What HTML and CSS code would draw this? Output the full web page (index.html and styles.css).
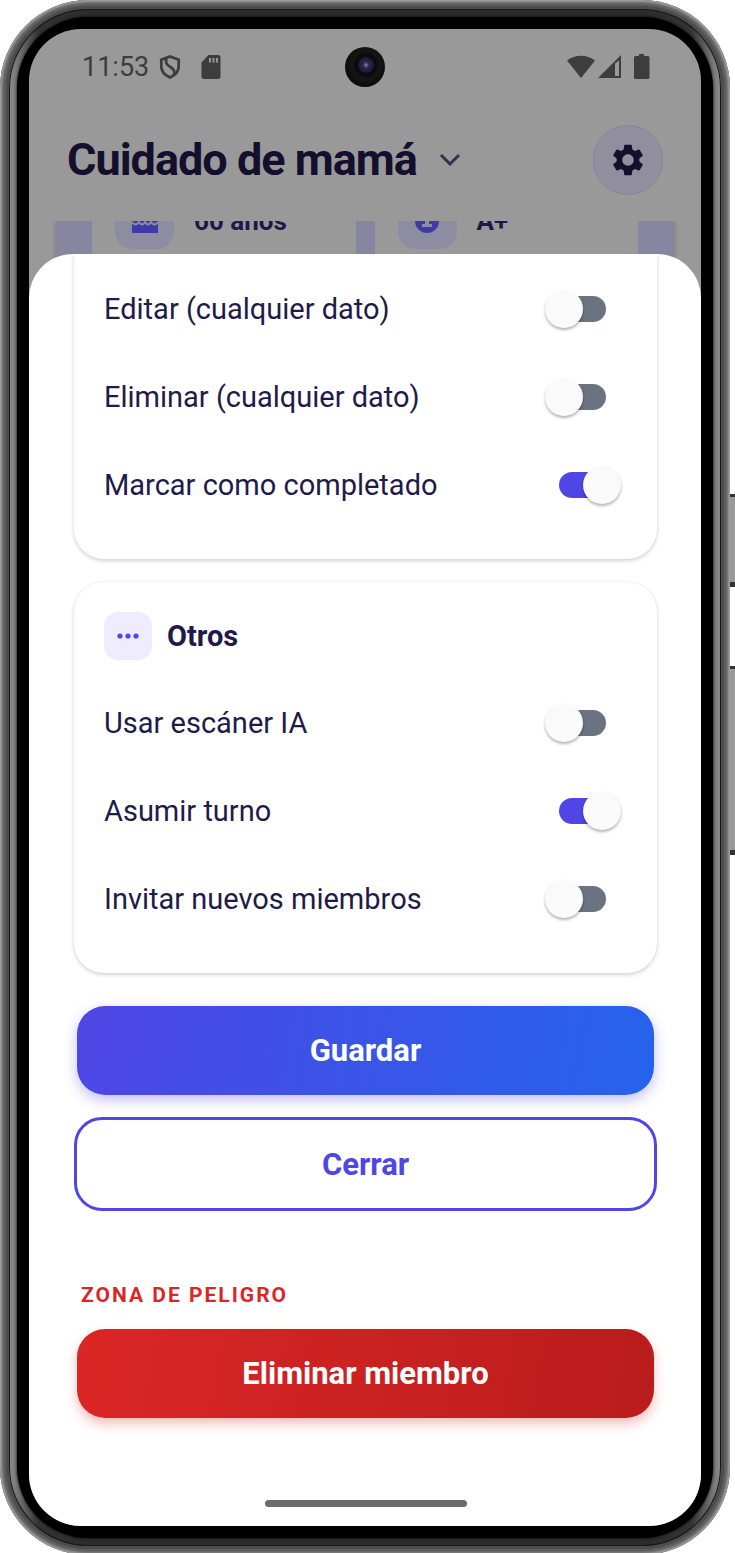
FILE: index.html
```html
<!DOCTYPE html>
<html lang="es">
<head>
	<meta charset="UTF-8">
	<meta name="viewport" content="width=device-width, initial-scale=1">
	<title>Cuidado de mamá</title>
	<link rel="stylesheet" href="styles.css">
</head>
<body>
<div class="phone">
	<span class="side-key power"></span>
	<span class="side-key volume"></span>
	<div class="rim">
	<div class="bezel">
	<div class="screen">

		<div class="status">
			<span class="time">11:53</span>
			<svg class="shield" width="22" height="26" viewBox="0 0 24 28" fill="none" stroke="#3d3d3d" stroke-width="3">
				<path d="M12 2.500 21.500 6v7.500c0 5.500-4 9.500-9.500 12-5.500-2.500-9.500-6.500-9.500-12V6z"/>
				<path d="M8 4.500c-1 5 0 7 4.500 9.500 4 2.500 5 4.500 4 8.500"/>
			</svg>
			<svg class="sdcard" width="20" height="24" viewBox="0 0 20 24">
				<path fill="#3d3d3d" d="M7.500 0H17a2.500 2.500 0 0 1 2.500 2.500v19A2.500 2.500 0 0 1 17 24H3a2.500 2.500 0 0 1-2.500-2.500V7.500z"/>
				<path stroke="#999" stroke-width="2" d="M9 3v4.500M12.500 3v4.500M16 3v4.500"/>
			</svg>
			<span class="camera"></span>
			<svg class="signals" width="83" height="26" viewBox="0 0 83 26" fill="#3d3d3d">
				<path d="M0 6.500C8 0 20 0 28 6.500L14 24z"/>
				<path d="M54 1v23H31zM48 9.500V22h4V6.500z" fill-rule="evenodd"/>
				<path d="M72 0h5v2h4a1.500 1.500 0 0 1 1.500 1.500v20A1.500 1.500 0 0 1 81 25H68.500a1.500 1.500 0 0 1-1.500-1.500v-20A1.500 1.500 0 0 1 68.500 2H72z"/>
			</svg>
		</div>

		<header class="header">
			<h1>Cuidado de mamá</h1>
			<svg class="chevron" width="22" height="14" viewBox="0 0 22 14" fill="none" stroke="#353150" stroke-width="3">
				<path d="M2 2l9 9 9-9"/>
			</svg>
			<button class="settings" type="button" aria-label="Ajustes">
				<svg width="38" height="38" viewBox="0 0 24 24" fill="#140f2d">
					<path d="M19.140 12.940c.04-.3.06-.61.06-.94 0-.32-.02-.64-.07-.94l2.030-1.580c.18-.14.23-.41.12-.61l-1.920-3.320c-.12-.22-.37-.29-.59-.22l-2.390.96c-.5-.38-1.030-.7-1.620-.94L14.400 2.810c-.04-.24-.24-.41-.48-.41h-3.840c-.24 0-.43.17-.47.41L9.250 5.350C8.660 5.590 8.120 5.920 7.630 6.290L5.240 5.330c-.22-.08-.47 0-.59.22L2.740 8.870c-.12.21-.08.47.12.61l2.030 1.580c-.05.3-.09.63-.09.94s.02.64.07.94l-2.030 1.580c-.18.14-.23.41-.12.61l1.920 3.320c.12.22.37.29.59.22l2.390-.96c.5.38 1.030.7 1.620.94l.36 2.540c.05.24.24.41.48.41h3.840c.24 0 .44-.17.47-.41l.36-2.540c.59-.24 1.130-.56 1.620-.94l2.390.96c.22.08.47 0 .59-.22l1.920-3.320c.12-.22.07-.47-.12-.61zM12 15.600c-1.980 0-3.600-1.620-3.600-3.600s1.620-3.600 3.600-3.600 3.600 1.620 3.600 3.600-1.620 3.600-3.600 3.600z"/>
				</svg>
			</button>
		</header>

		<!-- resumen del paciente, queda detras de la hoja -->
		<section class="summary">
			<div class="summary-card">
				<div class="fact">
					<span class="fact-icon">
						<svg width="28" height="28" viewBox="0 0 28 28">
							<path fill="#3f3aa8" d="M1 10h26v17H1z"/>
							<path fill="none" stroke="#8d8ca5" stroke-width="2" d="M1 16q3.500 5 7 0 3 5 6 0 3 5 6 0 3.500 5 7 0"/>
						</svg>
					</span>
					<b>60 años</b>
				</div>
				<div class="fact">
					<span class="fact-icon">
						<svg width="24" height="28" viewBox="0 0 24 28">
							<circle cx="12" cy="15" r="12" fill="#3f3aa8"/>
							<path fill="#8d8ca5" d="M10 11h4v7h3v3H7v-3h3z"/>
						</svg>
					</span>
					<b>A+</b>
				</div>
			</div>
		</section>

		<main class="sheet">
			<section class="card first">
				<label class="row">Editar (cualquier dato) <input type="checkbox" role="switch"></label>
				<label class="row">Eliminar (cualquier dato) <input type="checkbox" role="switch"></label>
				<label class="row">Marcar como completado <input type="checkbox" role="switch" checked></label>
			</section>

			<section class="card">
				<h2>
					<span class="dots">
						<svg width="22" height="6" viewBox="0 0 22 6" fill="#4f46e5">
							<circle cx="3" cy="3" r="2.600"/><circle cx="11" cy="3" r="2.600"/><circle cx="19" cy="3" r="2.600"/>
						</svg>
					</span>
					Otros
				</h2>
				<label class="row">Usar escáner IA <input type="checkbox" role="switch"></label>
				<label class="row">Asumir turno <input type="checkbox" role="switch" checked></label>
				<label class="row">Invitar nuevos miembros <input type="checkbox" role="switch"></label>
			</section>

			<div class="actions">
				<button class="btn save" type="button">Guardar</button>
				<button class="btn close" type="button">Cerrar</button>
				<h3>ZONA DE PELIGRO</h3>
				<button class="btn delete" type="button">Eliminar miembro</button>
			</div>
			<div class="home-bar"></div>
		</main>

	</div>
	</div>
	</div>
</div>
</body>
</html>
```

FILE: styles.css
```css
*{margin:0;padding:0;box-sizing:border-box;}
body{
	background:#fff;
	font-family:Roboto, "Liberation Sans", sans-serif;
	color:#1e1b4b;
}
button{font-family:inherit;cursor:pointer;}
svg{display:block;flex:none;}

/* carcasa */
.phone{
	position:relative;
	margin-right:5px;
	padding:9px;
	border-radius:88px;
	background:#4c4c4c;
	box-shadow:inset 0 0 3px 2px #a8a8a8, inset 0 0 0 6px #5c5c5c;
}
.rim{
	padding:8px;
	border-radius:79px;
	background:linear-gradient(90deg, #8c8c8c, #777 8px, #333 30px, #2c2c2c 80px, #2c2c2c calc(100% - 80px), #333 calc(100% - 30px), #777 calc(100% - 8px), #8c8c8c);
	box-shadow:inset 0 0 0 1px #161616;
}
.bezel{
	padding:12px;
	border-radius:71px;
	background:#000;
	box-shadow:0 0 3px #000;
}
.screen{
	overflow:hidden;
	border-radius:52px;
	background:#999;
}
.side-key{
	position:absolute;
	right:-5px;
	width:5px;
	background:#999;
	border-top:3px solid #333;
	border-bottom:5px solid #333;
}
.power{top:494px;height:93px;}
.volume{top:666px;height:189px;}

.status{
	position:relative;
	display:flex;
	align-items:center;
	height:76px;
	padding:0 51px 0 53px;
	color:#3d3d3d;
}
.time{font-size:27px;}
.shield{margin-left:10px;}
.sdcard{margin-left:20px;}
.signals{margin-left:auto;}
.camera{
	position:absolute;
	left:50%;
	top:18px;
	width:40px;
	height:40px;
	margin-left:-20px;
	border-radius:50%;
	background:radial-gradient(circle at 21px 18px, #8d80b8 0, #302451 3px, #172230 7px, #08080a 9px, #151515 14px, #0d0d0d 20px);
}

.header{
	display:flex;
	align-items:center;
	height:116px;
	padding:0 38px 6px;
	color:#140f2d;
}
.header h1{font-size:45px;line-height:56px;letter-spacing:-1px;}
.chevron{margin-left:22px;}
.settings{
	display:flex;
	align-items:center;
	justify-content:center;
	width:70px;
	height:70px;
	margin-left:auto;
	border:1px solid #8684a2;
	border-radius:50%;
	background:#918f9d;
}

.summary{
	height:80px;
	padding:0 27px;
	overflow:hidden;
}
.summary-card{
	display:flex;
	gap:19px;
	height:100%;
	padding:0 36px;
	background:#8786a0;
	box-shadow:0 0 5px #777;
}
.fact{
	flex:1;
	display:flex;
	align-items:flex-start;
	gap:20px;
	padding-left:23px;
	background:#999;
	font-size:26px;
	line-height:32px;
}
.fact-icon{
	display:flex;
	justify-content:center;
	width:59px;
	height:58px;
	margin-top:-30px;
	padding-top:15px;
	border-radius:18px;
	background:#8d8ca2;
}
.fact b{margin-top:-16px;color:#1d184b;}

/* hoja de permisos */
.sheet{
	position:relative;
	margin-top:-47px;
	padding:0 44px 19px 45px;
	overflow:hidden;
	border-radius:44px 44px 0 0;
	background:#fff;
}
.card{
	margin-bottom:23px;
	padding:30px;
	border-radius:30px;
	background:#fff;
	box-shadow:0 2px 4px rgba(0,0,0,.16), 0 0 3px rgba(0,0,0,.06);
}
.card.first{
	padding-top:11px;
	border-radius:0 0 30px 30px;
}
.card h2{
	display:flex;
	align-items:center;
	gap:15px;
	margin-bottom:19px;
	font-size:29px;
}
.dots{
	display:flex;
	align-items:center;
	justify-content:center;
	width:48px;
	height:48px;
	border-radius:14px;
	background:#eeecfd;
}
.row{
	display:flex;
	align-items:center;
	justify-content:space-between;
	height:88px;
	font-size:29px;
	cursor:pointer;
}
.row input{
	appearance:none;
	position:relative;
	width:47px;
	height:26px;
	margin-right:21px;
	border-radius:13px;
	background:#6b7280;
	cursor:pointer;
}
.row input::before{
	content:"";
	position:absolute;
	left:-14px;
	top:-6px;
	width:38px;
	height:38px;
	border-radius:50%;
	background:#fafafa;
	box-shadow:0 2px 3px rgba(0,0,0,.3);
}
.row input:checked{background:#4f46e5;}
.row input:checked::before{left:24px;}

.actions{
	display:flex;
	flex-direction:column;
	padding:10px 3px 0;
}
.btn{
	height:89px;
	border:0;
	border-radius:28px;
	color:#fff;
	font-size:31px;
	font-weight:bold;
}
.save{
	background:linear-gradient(100deg, #4f46e5, #2563eb);
	box-shadow:0 5px 14px rgba(79,70,229,.35);
}
.close{
	height:94px;
	margin:22px -3px 0;
	border:3px solid #4f46e5;
	background:#fff;
	color:#4f46e5;
}
.actions h3{
	margin:71px 4px 21px;
	color:#dc2626;
	font-size:21px;
	line-height:26px;
	letter-spacing:2px;
}
.delete{
	background:linear-gradient(100deg, #dc2626, #b91c1c);
	box-shadow:0 6px 12px rgba(220,38,38,.3);
}
.home-bar{
	width:202px;
	height:7px;
	margin:82px auto 0;
	border-radius:4px;
	background:#6b6b6b;
}
```
